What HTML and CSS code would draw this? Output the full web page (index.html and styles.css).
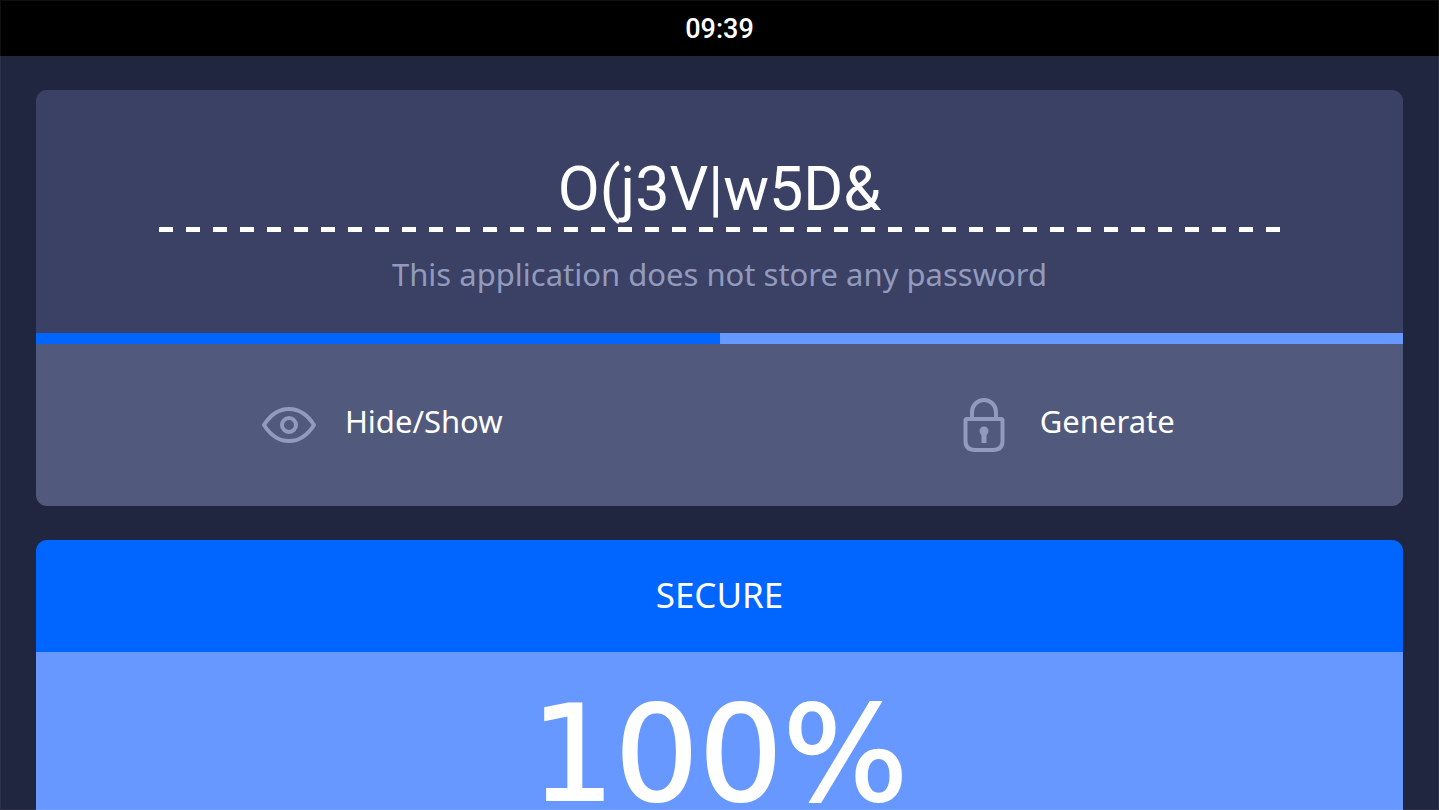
FILE: index.html
```html
<!DOCTYPE html>
<html lang="en">
<head>
<meta charset="utf-8">
<meta name="viewport" content="width=device-width, initial-scale=1">
<title>Password generator</title>
<link rel="stylesheet" href="styles.css">
</head>
<body>
<div class="app">
  <header class="status-bar"><time datetime="09:39">09:39</time></header>
  <main class="content">
    <section class="card">
      <div class="password-panel">
        <input class="password" type="text" value="O(j3V|w5D&amp;" aria-label="Password" readonly>
        <div class="dashes"></div>
        <p class="note">This application does not store any password</p>
      </div>
      <div class="strength"><div class="strength-fill"></div></div>
      <div class="actions">
        <button class="action" type="button">
          <svg class="icon" viewBox="0 0 56 56" aria-hidden="true">
            <path d="M3 28C9 18.500 18 12 28 12S47 18.500 53 28C47 37.500 38 44 28 44S9 37.500 3 28Z"/>
            <circle cx="28" cy="28" r="7"/>
          </svg>
          <span class="label">Hide/Show</span>
        </button>
        <button class="action" type="button">
          <svg class="icon" viewBox="0 0 56 56" aria-hidden="true">
            <path d="M16 22V15a12 12 0 0 1 24 0V22"/>
            <path d="M11 22H45Q46.500 22 46.500 23.500V44Q46.500 53 37 53H19Q9.500 53 9.500 44V23.500Q9.500 22 11 22Z"/>
            <circle class="solid" cx="28" cy="34" r="4.500"/>
            <path class="solid" d="M25.500 35h5v11h-5z"/>
          </svg>
          <span class="label">Generate</span>
        </button>
      </div>
    </section>
    <section class="card">
      <h1 class="rating">SECURE</h1>
      <div class="score">100%</div>
    </section>
  </main>
</div>
</body>
</html>
```
FILE: styles.css
```css
* {
  box-sizing: border-box;
}

body {
  margin: 0;
  background: #20263f;
  color: #fff;
  font-family: "Noto Sans", sans-serif;
}

.app {
  height: 100vh;
  overflow: hidden;
}

.app::after {
  content: "";
  position: fixed;
  inset: 0;
  border: 1px solid rgba(255, 255, 255, 0.06);
  pointer-events: none;
}

.status-bar {
  display: flex;
  align-items: center;
  justify-content: center;
  height: 56px;
  padding-top: 2px;
  background: #000;
  font: 500 27px/32px Roboto, sans-serif;
}

.content {
  display: flex;
  flex-direction: column;
  gap: 34px;
  padding: 34px 36px;
}

.card {
  border-radius: 11px;
  overflow: hidden;
}

.password-panel {
  display: flex;
  flex-direction: column;
  align-items: center;
  padding: 63px 0 38px;
  background: #3a4164;
}

.password {
  width: 82%;
  height: 72px;
  padding: 0;
  border: 0;
  outline: 0;
  background: transparent;
  color: #fff;
  font: 400 61px/72px Roboto, sans-serif;
  text-align: center;
}

.dashes {
  width: 82%;
  height: 5px;
  margin-top: 2px;
  background: repeating-linear-gradient(90deg, #fff 0 14px, transparent 14px 27px);
}

.note {
  margin: 22px 0 0;
  color: #929bbd;
  font-size: 31px;
  line-height: 41px;
}

.strength {
  height: 11px;
  background: #6698ff;
}

.strength-fill {
  width: 50%;
  height: 100%;
  background: #0066ff;
}

.actions {
  display: grid;
  grid-template-columns: 1fr 1fr;
  background: #51597c;
}

.action {
  display: flex;
  align-items: center;
  justify-content: center;
  gap: 28px;
  padding: 52px 0 52px 8px;
  border: 0;
  background: transparent;
  color: #fff;
  font: 400 31px/50px "Noto Sans", sans-serif;
  cursor: pointer;
}

.icon {
  width: 56px;
  height: 56px;
  fill: none;
  stroke: #929bbd;
  stroke-width: 4;
  stroke-linejoin: round;
}

.solid {
  fill: #929bbd;
  stroke: none;
}

.label {
  padding-bottom: 8px;
}

.rating {
  margin: 0;
  padding: 31px 0 33px;
  background: #0066ff;
  font-size: 35px;
  font-weight: 400;
  line-height: 48px;
  text-align: center;
}

.score {
  padding: 22px 0 40px;
  background: #6698ff;
  font: 132px/160px "DejaVu Sans", sans-serif;
  -webkit-text-stroke: 2px #fff;
  text-align: center;
}
```
